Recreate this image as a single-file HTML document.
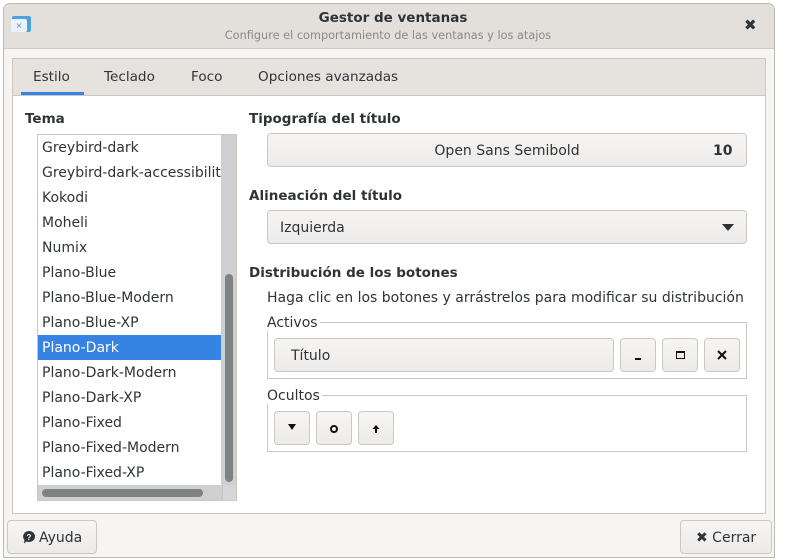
<html><head><style>
*{box-sizing:border-box;margin:0;padding:0}
body{width:786px;height:560px;background:#fff;font-family:"DejaVu Sans","Liberation Sans",sans-serif;font-size:14px;color:#2e3436;position:relative;overflow:hidden}
.a{position:absolute}
.x{margin-top:1px}
.win{left:3px;top:3px;width:772px;height:555px;background:#f6f5f4;border:1px solid #bdb8b3;border-radius:7px 7px 0 0}
.tb{left:4px;top:4px;width:770px;height:45px;background:#e3e0dc;border-bottom:1px solid #cfcac5;border-radius:6px 6px 0 0}
.btn{background:linear-gradient(#f6f5f4,#edebe9);border:1px solid #cdc7c2;border-radius:4px}
.row{position:absolute;left:0;width:184px;height:25px;line-height:27px;padding-left:4px;white-space:nowrap;overflow:hidden}
.h{font-weight:bold;font-size:13.5px}
.t{font-size:13.6px}
</style></head><body>
<div class="a win"></div>
<div class="a tb"></div>
<div class="a" style="left:12px;top:16px;width:19px;height:16px;background:#4aa3df;border-radius:2px"></div>
<div class="a" style="left:11px;top:19px;width:16px;height:13px;background:#eaf3fb;border-radius:2px;font-size:8px;color:#4a90d9;text-align:center;line-height:13px">×</div>
<div class="a x" style="left:0;width:786px;top:9px;text-align:center;font-weight:bold;font-size:13.5px;color:#2e3436">Gestor de ventanas</div>
<div class="a x" style="left:0;width:776px;top:28px;text-align:center;font-size:11.3px;color:#888a85">Configure el comportamiento de las ventanas y los atajos</div>
<div class="a" style="left:744px;top:16px;font-size:15px;font-weight:bold;color:#2e3436">✖</div>
<div class="a" style="left:12px;top:58px;width:754px;height:456px;border:1px solid #cdc7c2;background:#fff"></div>
<div class="a" style="left:13px;top:59px;width:752px;height:37px;background:#e6e3df;border-bottom:1px solid #cdc7c2"></div>
<div class="a t x" style="left:33px;top:68px">Estilo</div>
<div class="a" style="left:21px;top:92px;width:63px;height:3px;background:#3584e4"></div>
<div class="a t x" style="left:104px;top:68px">Teclado</div>
<div class="a t x" style="left:191px;top:68px">Foco</div>
<div class="a t x" style="left:258px;top:68px">Opciones avanzadas</div>
<div class="a h x" style="left:25px;top:110px">Tema</div>
<div class="a" style="left:37px;top:134px;width:200px;height:367px;border:1px solid #cdc7c2;background:#fff;overflow:hidden">
<div class="row" style="top:0">Greybird-dark</div>
<div class="row" style="top:25px">Greybird-dark-accessibility</div>
<div class="row" style="top:50px">Kokodi</div>
<div class="row" style="top:75px">Moheli</div>
<div class="row" style="top:100px">Numix</div>
<div class="row" style="top:125px">Plano-Blue</div>
<div class="row" style="top:150px">Plano-Blue-Modern</div>
<div class="row" style="top:175px">Plano-Blue-XP</div>
<div class="row" style="top:200px;background:#3584e4;color:#fff">Plano-Dark</div>
<div class="row" style="top:225px">Plano-Dark-Modern</div>
<div class="row" style="top:250px">Plano-Dark-XP</div>
<div class="row" style="top:275px">Plano-Fixed</div>
<div class="row" style="top:300px">Plano-Fixed-Modern</div>
<div class="row" style="top:325px">Plano-Fixed-XP</div>
<div class="a" style="left:183px;top:0;width:16px;height:365px;background:#cfcfcf"></div>
<div class="a" style="left:187px;top:139px;width:8px;height:208px;background:#7e8283;border-radius:4px"></div>
<div class="a" style="left:0;top:350px;width:199px;height:16px;background:#cfcfcf"></div>
<div class="a" style="left:4px;top:354px;width:161px;height:8px;background:#7e8283;border-radius:4px"></div>
<div class="a" style="left:184px;top:350px;width:15px;height:16px;background:#d6d6d6;border-left:1px solid #c4c4c4"></div>
</div>
<div class="a h x" style="left:249px;top:110px">Tipografía del título</div>
<div class="a btn" style="left:267px;top:133px;width:480px;height:34px"></div>
<div class="a x" style="left:267px;top:142px;width:480px;text-align:center">Open Sans Semibold</div>
<div class="a x" style="left:713px;top:142px;font-weight:bold">10</div>
<div class="a h x" style="left:249px;top:187px">Alineación del título</div>
<div class="a btn" style="left:267px;top:210px;width:480px;height:34px"></div>
<div class="a x" style="left:280px;top:219px">Izquierda</div>
<div class="a" style="left:722px;top:224px;width:0;height:0;border-left:6px solid transparent;border-right:6px solid transparent;border-top:7px solid #2e3436"></div>
<div class="a h x" style="left:249px;top:264px">Distribución de los botones</div>
<div class="a x" style="left:267px;top:289px">Haga clic en los botones y arrástrelos para modificar su distribución</div>
<div class="a" style="left:267px;top:322px;width:480px;height:57px;border:1px solid #cdc7c2"></div>
<div class="a x" style="left:267px;top:314px;background:#fff;padding-right:2px">Activos</div>
<div class="a btn" style="left:274px;top:338px;width:340px;height:34px"></div>
<div class="a x" style="left:291px;top:347px">Título</div>
<div class="a btn" style="left:620px;top:338px;width:36px;height:34px"></div>
<div class="a" style="left:635px;top:358px;width:6px;height:2px;background:#111"></div>
<div class="a btn" style="left:662px;top:338px;width:36px;height:34px"></div>
<div class="a" style="left:676px;top:351px;width:9px;height:8px;border:1.5px solid #111;border-top-width:2.5px"></div>
<div class="a btn" style="left:704px;top:338px;width:36px;height:34px"></div>
<svg class="a" style="left:716px;top:349px" width="12" height="12" viewBox="0 0 12 12"><path d="M2 2L10 10M10 2L2 10" stroke="#111" stroke-width="2"/></svg>
<div class="a" style="left:267px;top:395px;width:480px;height:57px;border:1px solid #cdc7c2"></div>
<div class="a x" style="left:267px;top:387px;background:#fff;padding-right:2px">Ocultos</div>
<div class="a btn" style="left:274px;top:411px;width:36px;height:34px"></div>
<div class="a" style="left:288px;top:424px;width:0;height:0;border-left:4px solid transparent;border-right:4px solid transparent;border-top:6px solid #111"></div>
<div class="a btn" style="left:316px;top:411px;width:36px;height:34px"></div>
<div class="a" style="left:330px;top:425px;width:8px;height:8px;border:2px solid #111;border-radius:50%"></div>
<div class="a btn" style="left:358px;top:411px;width:36px;height:34px"></div>
<svg class="a" style="left:370px;top:423px" width="12" height="12" viewBox="0 0 12 12"><path d="M6 2L2.5 6H5V10H7V6H9.5Z" fill="#111"/></svg>
<div class="a btn" style="left:7px;top:520px;width:90px;height:34px"></div>
<svg class="a" style="left:22px;top:530px" width="14" height="14" viewBox="0 0 14 14"><path d="M7 1A6 5.5 0 1 1 4.5 11.5L2 13.5L2.5 10A6 5.5 0 0 1 7 1Z" fill="#2e3436"/><text x="7" y="10" font-size="8" font-weight="bold" fill="#fff" text-anchor="middle" font-family="Liberation Sans">?</text></svg>
<div class="a x" style="left:39px;top:529px;font-size:14px">Ayuda</div>
<div class="a btn" style="left:680px;top:520px;width:92px;height:34px"></div>
<div class="a x" style="left:696px;top:529px;font-size:14px">✖ Cerrar</div>
</body></html>
